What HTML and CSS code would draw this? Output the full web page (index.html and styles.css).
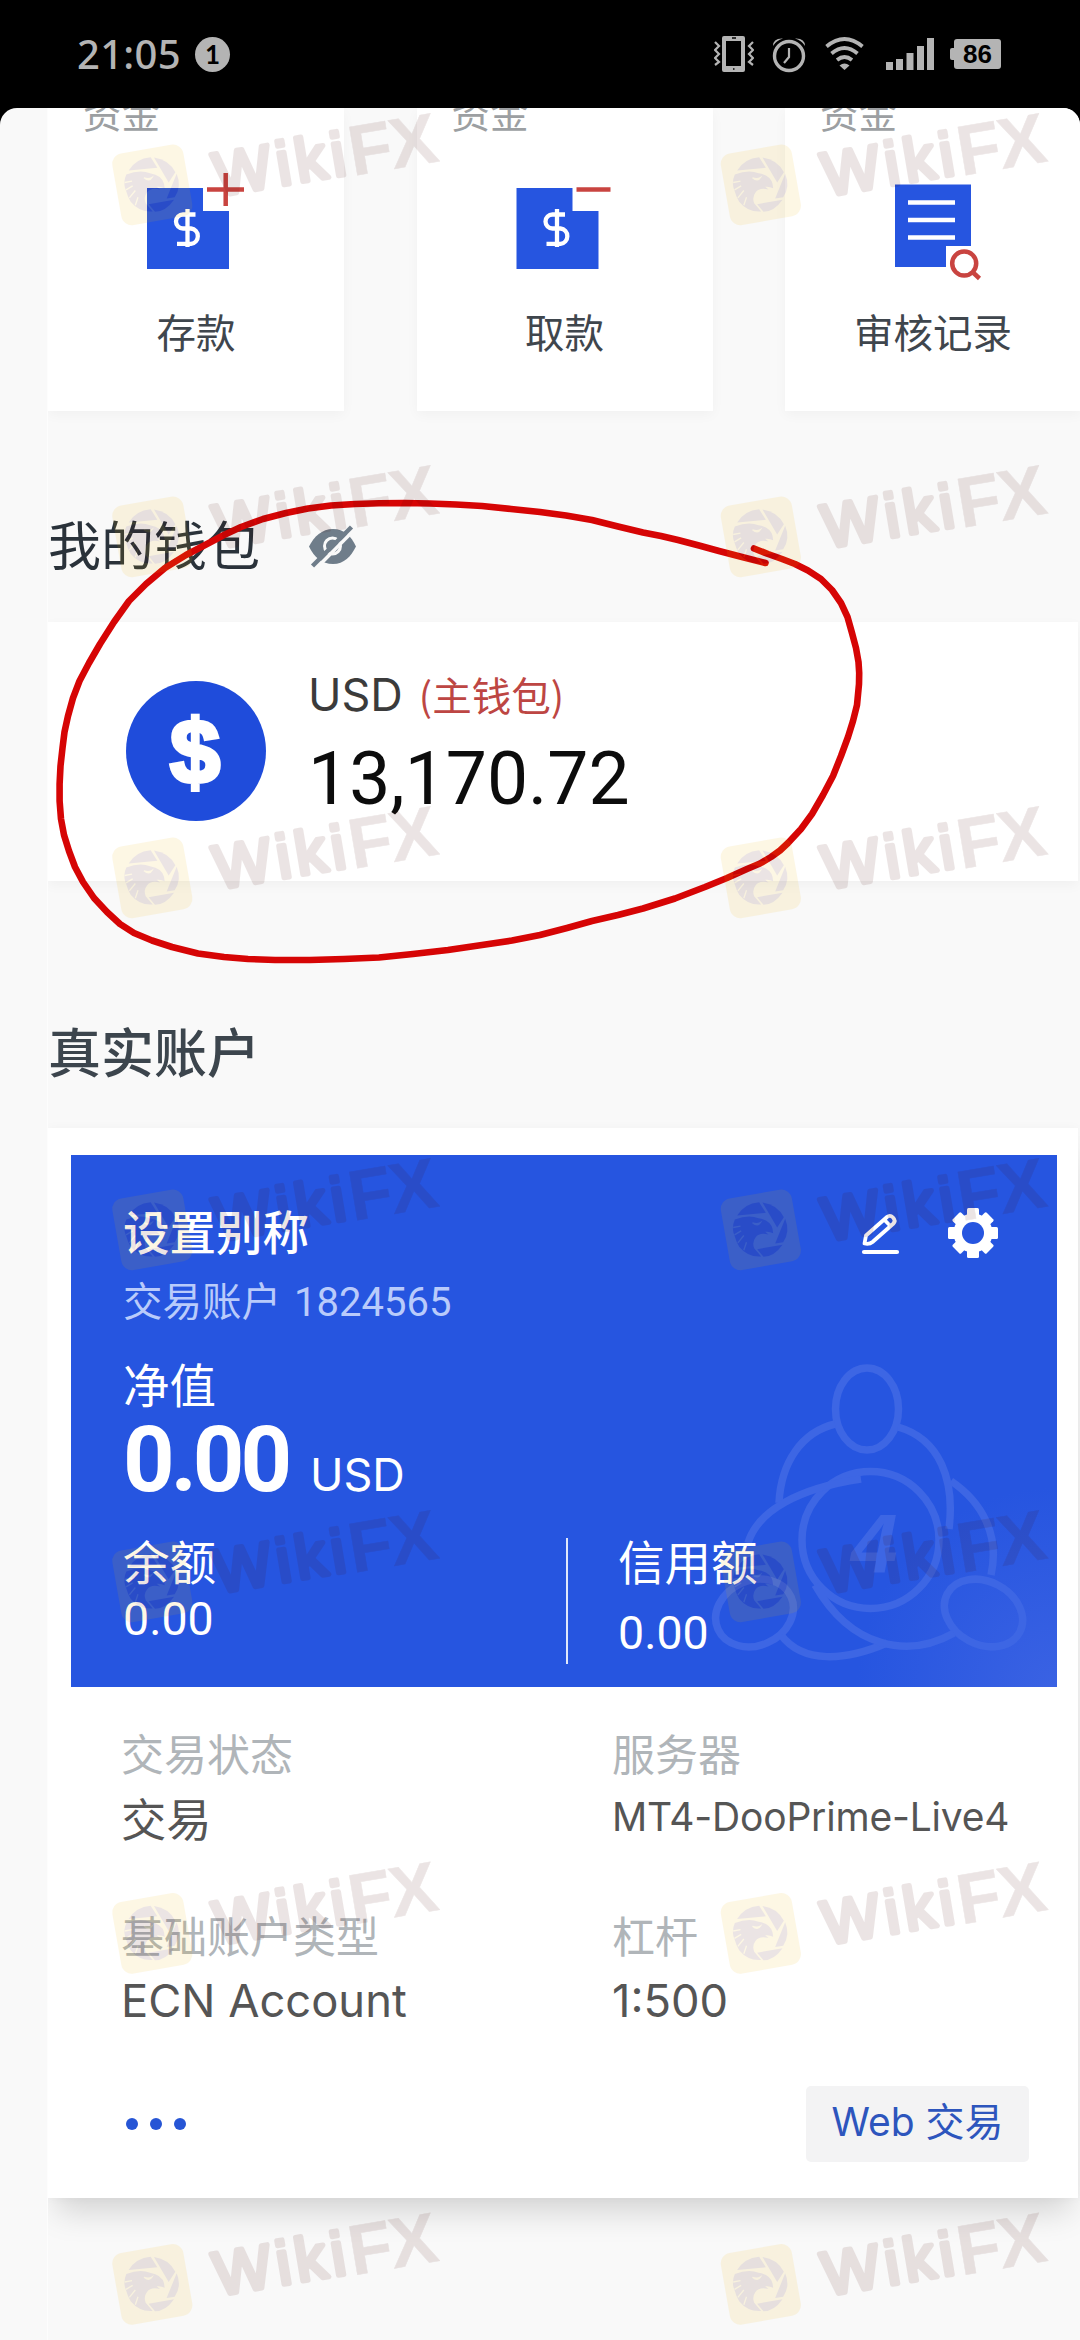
FILE: index.html
```html
<!DOCTYPE html>
<html lang="zh-CN">
<head>
<meta charset="utf-8">
<title>我的钱包</title>
<link rel="stylesheet" href="styles.css">
</head>
<body>
<div class="screen">
  <header class="status">
    <span class="time">21:05</span>
    <span class="badge">1</span>
    <div class="status-icons">
      <svg width="40" height="38" viewBox="713 34 40 38">
        <path fill="#b4b4b4" fill-rule="evenodd" d="M723 35h19q2 0 2 2v32q0 2-2 2h-19q-2 0-2-2v-32q0-2 2-2zM725 40v25h15v-25z"/>
        <path d="M731 37h4M732 68h1.5" stroke="#000" stroke-width="1.5"/>
        <path d="M714 41l4 4-4 4 4 4-4 4 4 4-4 3M752 41l-4 4 4 4-4 4 4 4-4 4 4 3" fill="none" stroke="#b4b4b4" stroke-width="2.2"/>
      </svg>
      <svg class="i-alarm" width="34" height="38" viewBox="771 35 34 38">
        <circle cx="788" cy="56" r="14.500" fill="none" stroke="#b4b4b4" stroke-width="3.400"/>
        <path d="M788 48v9l-5 6" fill="none" stroke="#b4b4b4" stroke-width="2.200"/>
        <path d="M772 46q0-8 10-7.500q-7 2-10 7.500zM804 46q0-8-10-7.500q7 2 10 7.500z" fill="#b4b4b4"/>
      </svg>
      <svg class="i-wifi" width="40" height="36" viewBox="824 36 40 36">
        <path d="M825.500 46.500q18-15 36 0M830.500 53.500q13-11 26 0M836 60q7.500-6 15 0" fill="none" stroke="#b4b4b4" stroke-width="3.800"/>
        <path d="M838.500 65.500q5-4 10 0l-5 4.500z" fill="#b4b4b4"/>
      </svg>
      <svg class="i-signal" width="48" height="34" viewBox="885 36 48 34">
        <path fill="#b4b4b4" d="M885 61h7v8h-7zM895 58h7v11h-7zM905.500 52h7v17h-7zM916 45h7v24h-7zM926 37h7v32h-7z"/>
      </svg>
      <span class="battery">86</span>
    </div>
  </header>

  <main class="panel">
    <div class="content">
      <section class="actions">
        <div class="action">
          <span class="tag">资金</span>
          <svg width="296" height="130" viewBox="48 160 296 130">
            <path d="M147 188h56v23h26v58h-82z" fill="#2655e0"/>
            <path d="M195.500 214.500h-12.500a7 7 0 0 0 0 14h8a7.700 7.700 0 0 1 0 15.300h-14M187.500 209v38" fill="none" stroke="#fff" stroke-width="4.300"/>
            <path d="M207 189.500h37M225.700 173v33" stroke="#c94440" stroke-width="4.500"/>
          </svg>
          <span class="label">存款</span>
        </div>
        <div class="action">
          <span class="tag">资金</span>
          <svg width="296" height="130" viewBox="47.500 160 296 130">
            <path d="M147 188h56v23h26v58h-82z" fill="#2655e0"/>
            <path d="M195.500 214.500h-12.500a7 7 0 0 0 0 14h8a7.700 7.700 0 0 1 0 15.300h-14M187.500 209v38" fill="none" stroke="#fff" stroke-width="4.300"/>
            <path d="M207 189.500h34" stroke="#c94440" stroke-width="4.500"/>
          </svg>
          <span class="label">取款</span>
        </div>
        <div class="action">
          <span class="tag">资金</span>
          <svg width="296" height="130" viewBox="784 160 296 130">
            <path d="M894 184.500h76v61.500h-25v21h-51z" fill="#2655e0"/>
            <path d="M907 202.500h47M907 220h47M907 237.500h47" stroke="#fff" stroke-width="4.600"/>
            <circle cx="963.200" cy="263.500" r="12" fill="none" stroke="#c94440" stroke-width="4.500"/>
            <path d="M971 271.500l7.500 7" stroke="#c94440" stroke-width="4.500"/>
          </svg>
          <span class="label">审核记录</span>
        </div>
      </section>

      <h2 class="heading wallet-heading">我的钱包
        <svg width="48" height="44" viewBox="309 525 48 44">
          <path d="M309 546.500c5-10 13-17.500 24-17.500s18 7 23 17.500c-5 10-12 17.500-23 17.500s-19-7-24-17.500z" fill="#6f7d8a"/>
          <circle cx="332.500" cy="546" r="8" fill="none" stroke="#f9f9f9" stroke-width="3"/>
          <path d="M316.500 568l40-40.500" stroke="#f9f9f9" stroke-width="3.600"/>
          <path d="M312.500 566l39-39" stroke="#6f7d8a" stroke-width="4.400"/>
        </svg>
      </h2>
      <section class="wallet">
        <div class="coin">$</div>
        <div class="wallet-text">
          <div class="currency">USD<span class="main-tag">(主钱包)</span></div>
          <div class="amount">13,170.72</div>
        </div>
      </section>

      <h2 class="heading account-heading">真实账户</h2>
      <section class="account">
        <div class="blue">
          <svg class="figure" width="336" height="310" viewBox="700 1355 336 310">
            <g fill="none" stroke="#3d66e4" stroke-width="7.500">
              <ellipse cx="867" cy="1409" rx="31.500" ry="41"/>
              <circle cx="870.500" cy="1540" r="68.500"/>
              <ellipse cx="754.500" cy="1613" rx="40" ry="32.500" transform="rotate(-24 754.500 1613)"/>
              <ellipse cx="983.500" cy="1613" rx="41" ry="31.500" transform="rotate(28 983.500 1613)"/>
              <path d="M835 1424C802 1432 781 1462 779 1503"/>
              <path d="M898 1427C940 1439 955 1480 949 1529"/>
              <path d="M748 1543C758 1510 800 1488 861 1479"/>
              <path d="M951 1481C982 1502 1000 1535 991 1575"/>
              <path d="M781 1635C803 1664 845 1661 887 1643"/>
              <path d="M815 1585C851 1648 908 1659 954 1633"/>
            </g>
            <text class="figure-no" x="851" y="1573">4</text>
          </svg>
          <div class="title-row">
            <span class="nickname">设置别称</span>
            <svg width="40" height="46" viewBox="859 1211 40 46">
              <path d="M863.500 1244.500l1.500-8 21-18.500q3-2.500 6 .5t.5 6l-21 18.500q-3 2.500-8 1.500zM883 1220.500l6.500 6.500" fill="none" stroke="#fff" stroke-width="3.800" stroke-linejoin="round"/>
              <path d="M863 1253h33" stroke="#fff" stroke-width="4.200" stroke-linecap="round"/>
            </svg>
            <svg class="gear" width="50" height="50" viewBox="-25 -25 50 50">
              <g fill="#fff">
                <rect x="-6" y="-25" width="12" height="50" rx="1.500"/>
                <rect x="-6" y="-24" width="12" height="48" rx="1.500" transform="rotate(45)"/>
                <rect x="-6" y="-25" width="12" height="50" rx="1.500" transform="rotate(90)"/>
                <rect x="-6" y="-24" width="12" height="48" rx="1.500" transform="rotate(135)"/>
                <circle r="19.500"/>
              </g>
              <circle r="11" fill="#2655e0"/>
            </svg>
          </div>
          <div class="acct-no">交易账户 <span class="digits">1824565</span></div>
          <div class="equity-label">净值</div>
          <div class="equity"><b>0.00</b><span>USD</span></div>
          <div class="balances">
            <div class="balance">余额<span class="val">0.00</span></div>
            <div class="balance credit">信用额<span class="val">0.00</span></div>
          </div>
        </div>
        <div class="info">
          <div class="cell"><span class="k">交易状态</span><span class="v trade">交易</span></div>
          <div class="cell"><span class="k">服务器</span><span class="v server">MT4-DooPrime-Live4</span></div>
          <div class="cell"><span class="k">基础账户类型</span><span class="v">ECN Account</span></div>
          <div class="cell"><span class="k">杠杆</span><span class="v ratio">1:500</span></div>
        </div>
        <div class="footer">
          <div class="dots"><i></i><i></i><i></i></div>
          <div class="web-btn">Web 交易</div>
        </div>
      </section>
    </div>
  </main>

  <svg class="overlay" width="1080" height="2340" viewBox="0 0 1080 2340">
    <defs>
      <g id="mark" opacity=".1">
        <g transform="scale(.33333)">
          <rect x="49" y="174" width="216" height="218" rx="32" fill="#f0b400" transform="rotate(-10 157 283)"/>
          <g fill="#460500">
            <path d="M86 240Q107 204 152 200L172 232Z"/>
            <path d="M162 201Q206 207 226 245L206 276Z"/>
            <path d="M230 250Q246 288 224 320L200 324Z"/>
            <path d="M222 328Q197 364 165 364L146 341Z"/>
            <path d="M79 252Q120 236 150 248 186 254 192 280L194 293Q182 287 170 289L180 297Q152 290 141 306 130 320 137 338L158 363Q118 366 92 334L84 318 80 306 75 292Q70 272 79 252Z"/>
          </g>
          <path d="M132 262q14 5 24-1-8 14-24 1M74 276l22-4M78 298l20-12M88 322l18-22M106 344l8-24" fill="none" stroke="#f0b400" stroke-width="4"/>
        </g>
        <g transform="translate(120.500 107.500) rotate(-9.500)" fill="#460500" stroke="#460500" stroke-linejoin="round">
          <text class="wm-a" x="-2.500" y="-2.500" textLength="132" stroke-width="5">Wiki</text>
          <text class="wm-b" x="134" y="0" textLength="89" stroke-width=".5">FX</text>
        </g>
      </g>
    </defs>
    <polyline fill="none" stroke="#d60505" stroke-width="6.600" stroke-linejoin="round" stroke-linecap="round" points="754,548.500 768,554 782,559 795,564 808,570.500 821,579 832,590 841,603 847.500,617 852,633 856,648 858.500,662 859.200,673 859,684 857,705 853,721 848,737 841,756 833,776 823,795 812,814 801,829 788,843 780,850.500 771,857 760,863.500 747,869 727,878 705,887 675,898.500 643,908.500 618,915 592,921 567,928 540,935 512,940.500 482,945 448,950 413,954 379,957.500 344,959 310,960 275,960 248,959 224,957 198,953.500 172,947 152,940.500 134,933 120,924 107,912 94,898 83,882 75,867 69,851 64,835 61,819 59.600,801 59.600,784 60.500,766 62.500,748 64.500,732 68,716 73,698 79.500,681 89,663 100,644 114,622 129,601 146,584 165,568 186,555 207,544 224,535 241,527 263,519 286,513 308,508.500 331,505.500 355,504 379,503.300 405,503 430,503.500 456,504.500 482,506 511,509 540,512 566,515.500 592,520 618,526.500 643,532.500 661,536 678,540 699,545.500 719,551 742,557 765.500,563"/>
    <use href="#mark" x="100" y="90.500"/><use href="#mark" x="708.500" y="90.500"/>
    <use href="#mark" x="100" y="442.500"/><use href="#mark" x="708.500" y="442.500"/>
    <use href="#mark" x="100" y="783.500"/><use href="#mark" x="708.500" y="783.500"/>
    <use href="#mark" x="100" y="1135.500"/><use href="#mark" x="708.500" y="1135.500"/>
    <use href="#mark" x="100" y="1487.500"/><use href="#mark" x="708.500" y="1487.500"/>
    <use href="#mark" x="100" y="1839"/><use href="#mark" x="708.500" y="1839"/>
    <use href="#mark" x="100" y="2190"/><use href="#mark" x="708.500" y="2190"/>
  </svg>
</div>
</body>
</html>
```

FILE: styles.css
```css
* { box-sizing: border-box; }
body {
  margin: 0;
  background: #000;
  font-family: Inter, "Noto Sans CJK SC", sans-serif;
}
svg { display: block; flex: none; }
.screen {
  position: relative;
  width: 1080px;
  height: 2340px;
  overflow: hidden;
  background: #000;
}

/* status bar */
.status {
  display: flex;
  align-items: center;
  height: 108px;
  padding: 0 79px 0 77px;
  color: #b4b4b4;
}
.time {
  width: 118px;
  font: 500 40px/40px "Noto Sans", "Noto Sans CJK SC", sans-serif;
  letter-spacing: .3px;
  white-space: nowrap;
}
.badge {
  width: 35px;
  height: 35px;
  border-radius: 50%;
  background: #b4b4b4;
  color: #000;
  font: 700 26px/35px Lato, sans-serif;
  text-align: center;
}
.status-icons {
  display: flex;
  align-items: center;
  margin-left: auto;
}
.i-alarm { margin-left: 18px; }
.i-wifi { margin-left: 19px; }
.i-signal { margin-left: 21px; }
.battery {
  position: relative;
  width: 47px;
  height: 30px;
  margin-left: 20px;
  border-radius: 3px;
  background: #b4b4b4;
  color: #000;
  font: 700 26px/31px "Liberation Sans", Inter, sans-serif;
  text-align: center;
}
.battery::before {
  content: "";
  position: absolute;
  left: -4px;
  top: 9px;
  width: 5px;
  height: 12px;
  border-radius: 2px 0 0 2px;
  background: #b4b4b4;
}

/* page */
.panel {
  height: 2232px;
  padding-left: 47px;
  overflow: hidden;
  border-radius: 17px 17px 0 0;
  background: #f9f9f9;
}
.content {
  height: 2232px;
  overflow: hidden;
  border-left: 1px solid #fdfdfd;
}

.actions {
  display: grid;
  grid-template-columns: repeat(3, 296px);
  gap: 72.5px;
  height: 303px;
}
.action {
  display: flex;
  flex-direction: column;
  background: #fff;
  box-shadow: 0 4px 12px rgba(0, 0, 0, .035);
}
.tag {
  height: 38px;
  margin: -13px 0 27px 35px;
  color: #9c9fa2;
  font-size: 38.500px;
  line-height: 38px;
}
.label {
  margin-top: 21px;
  color: #3f464d;
  font-size: 39.500px;
  line-height: 46px;
  text-align: center;
}

.heading {
  display: flex;
  align-items: center;
  height: 60px;
  margin: 0;
  font-size: 53px;
  line-height: 60px;
}
.wallet-heading {
  gap: 49px;
  margin-top: 106px;
  color: #2a323a;
  font-weight: 400;
}
.account-heading {
  margin-top: 143px;
  color: #3c454d;
  font-weight: 500;
}

.wallet {
  display: flex;
  gap: 42px;
  width: 1030px;
  height: 259px;
  margin-top: 45px;
  padding-left: 78px;
  background: #fff;
  box-shadow: 0 4px 12px rgba(0, 0, 0, .04);
}
.coin {
  width: 140px;
  height: 140px;
  margin-top: 59px;
  border-radius: 50%;
  background: #1f4cdb;
  color: #fff;
  font: 700 90px/142px "Liberation Sans", sans-serif;
  text-align: center;
  text-indent: -2px;
  -webkit-text-stroke: 4px #fff;
}
.wallet-text { margin-top: 48px; }
.currency {
  color: #3b3b3b;
  font-size: 45px;
  line-height: 50px;
  white-space: nowrap;
}
.main-tag {
  margin-left: 16px;
  color: #bd4643;
  font-family: "Noto Sans CJK SC", sans-serif;
  font-size: 39.500px;
  line-height: 40px;
}
.amount {
  margin-top: 19px;
  color: #0c0c0c;
  font: 400 73.200px/80px Roboto, sans-serif;
}

.account {
  width: 1030px;
  height: 1070px;
  margin-top: 44px;
  padding: 27px 21px 0 23px;
  background: #fff;
  box-shadow: 0 22px 30px -8px rgba(0, 0, 0, .15), 0 0 10px rgba(0, 0, 0, .03);
}
.blue {
  position: relative;
  height: 532px;
  padding: 53px 59px 0 52px;
  background: radial-gradient(circle at 100% 100%, #3a62e3 0, #2655e0 200px);
  color: #fff;
}
.figure {
  position: absolute;
  left: 629px;
  top: 200px;
}
.figure-no {
  fill: #3d66e4;
  font: italic 700 84px "Liberation Sans", sans-serif;
}
.title-row {
  position: relative;
  display: flex;
  align-items: center;
  height: 50px;
}
.nickname {
  margin-right: auto;
  font-size: 46.500px;
  font-weight: 500;
  line-height: 50px;
}
.gear { margin-left: 48px; }
.acct-no {
  margin-top: 22px;
  color: #b9cbfb;
  font-size: 39.500px;
  line-height: 44px;
  white-space: nowrap;
}
.digits { margin-left: 2px; font-family: Roboto, sans-serif; font-size: 40px; }
.equity-label {
  margin-top: 36px;
  font-size: 46.500px;
  line-height: 50px;
}
.equity {
  display: flex;
  align-items: baseline;
  gap: 22px;
  height: 90px;
  margin-top: 5px;
  font-size: 45px;
  line-height: 90px;
}
.equity b { font: 700 90px/90px Roboto, sans-serif; letter-spacing: -4px; }
.balances {
  position: relative;
  display: grid;
  grid-template-columns: 443px 1fr;
  height: 126px;
  margin-top: 32px;
}
.balance {
  display: flex;
  flex-direction: column;
  gap: 10px;
  padding-top: 2px;
  font-size: 46.500px;
  line-height: 46px;
}
.val { font-family: Roboto, sans-serif; }
.credit {
  gap: 24px;
  padding-left: 50px;
  border-left: 2px solid #dfe7fb;
}

.info {
  display: grid;
  grid-template-columns: 491px 1fr;
  row-gap: 70px;
  margin-top: 46px;
  padding-left: 50px;
}
.cell { height: 112px; white-space: nowrap; }
.k {
  display: block;
  color: #b0b5b9;
  font-size: 43px;
  line-height: 44px;
}
.v {
  display: block;
  margin-top: 17px;
  color: #555;
  font-size: 45.300px;
  line-height: 50px;
}
.trade { margin-top: 19px; }
.server { margin-top: 15px; font-size: 39px; letter-spacing: -.2px; }

.footer {
  display: flex;
  align-items: center;
  justify-content: space-between;
  height: 76px;
  margin-top: 59px;
  padding: 0 28px 0 55px;
}
.dots { display: flex; gap: 12px; }
.dots i {
  width: 12px;
  height: 12px;
  border-radius: 50%;
  background: #2655d5;
}
.web-btn {
  width: 223px;
  height: 76px;
  border-radius: 5px;
  background: #f3f3f4;
  color: #2d55bd;
  font-size: 39px;
  line-height: 71px;
  text-align: center;
  white-space: nowrap;
}

/* hand-drawn ring and repeated watermark */
.overlay {
  position: absolute;
  left: 0;
  top: 0;
}
.wm-a { font: 400 61px "Liberation Sans", sans-serif; }
.wm-b { font: 700 71px "Liberation Sans", sans-serif; }
```
